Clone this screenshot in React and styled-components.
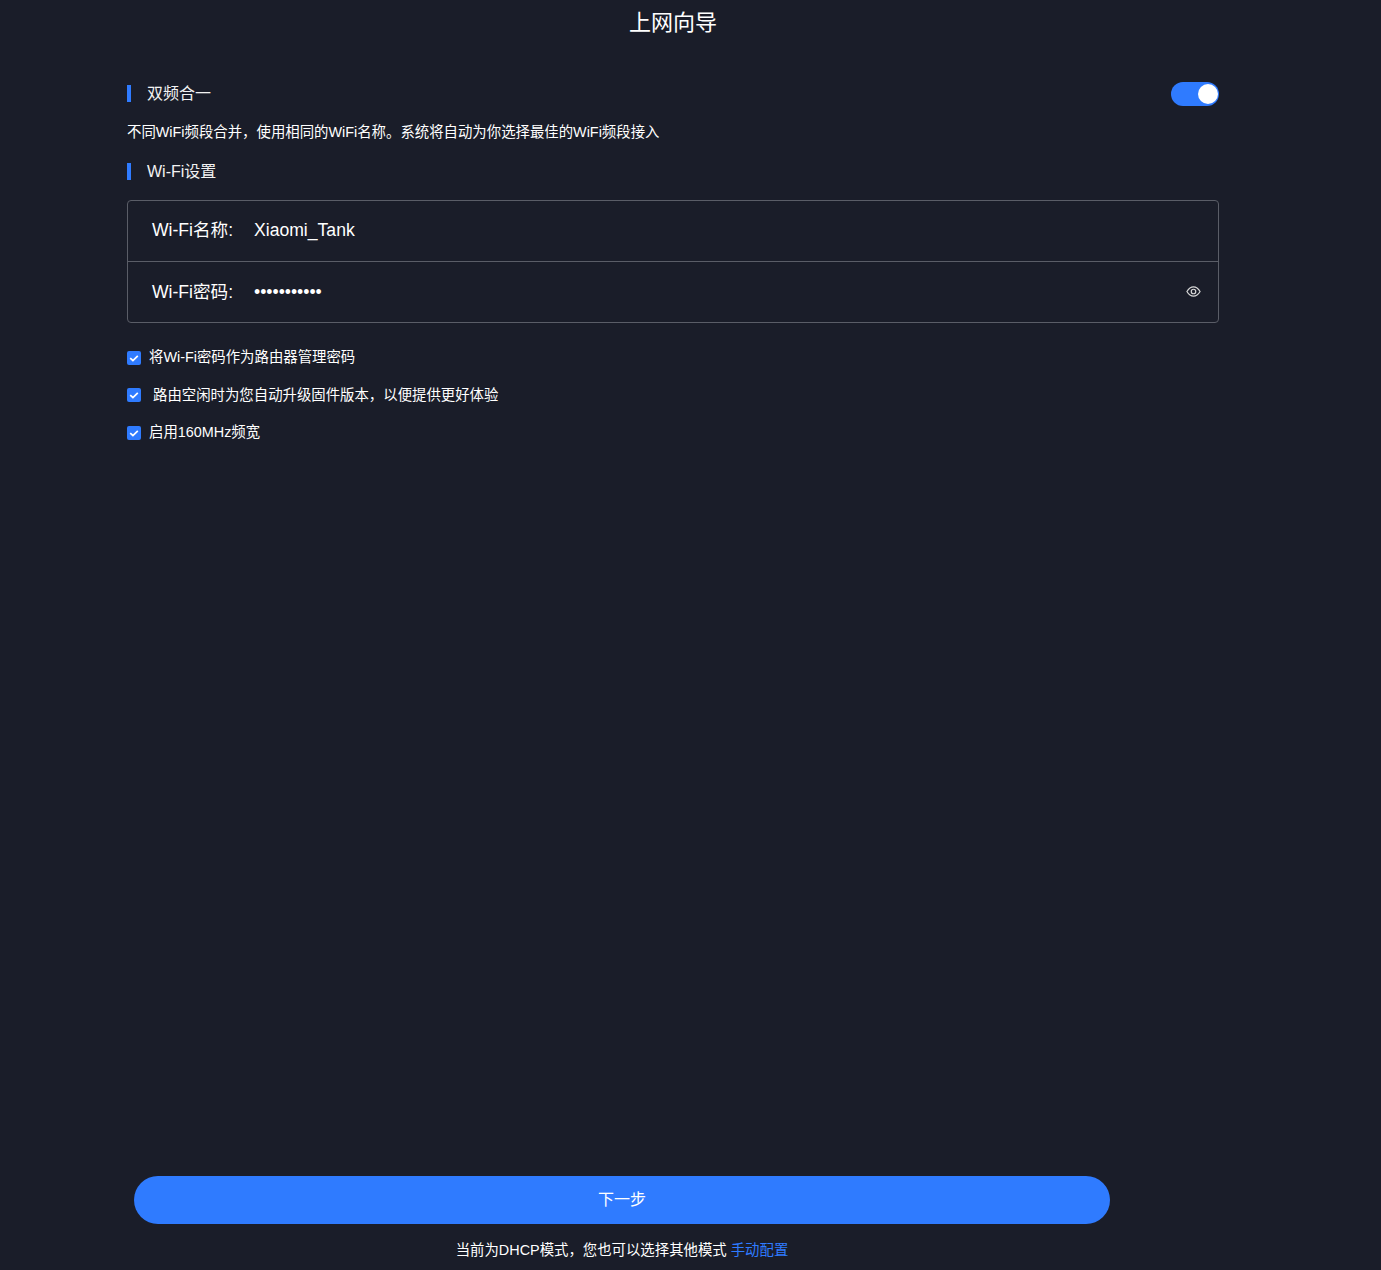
import React from "react";
import styled, { createGlobalStyle } from "styled-components";

const GlobalStyle = createGlobalStyle`
  html, body {
    margin: 0;
    padding: 0;
    background: #1a1d29;
    color: #fff;
    font-family: "Liberation Sans", "Noto Sans CJK SC", sans-serif;
  }
`;

const Page = styled.div`
  box-sizing: border-box;
  width: 1092px;
  height: 1270px;
  margin-left: 127px;
  display: flex;
  flex-direction: column;
`;

const Title = styled.h1`
  margin: 0;
  height: 45px;
  line-height: 45px;
  font-size: 22px;
  font-weight: 400;
  text-align: center;
`;

const SectionRow = styled.div`
  display: flex;
  align-items: flex-start;
  justify-content: space-between;
  height: 24px;
  margin-top: ${(p) => p.$top}px;
`;

const SectionTitle = styled.div`
  border-left: 4px solid #2f7bff;
  padding-left: 16px;
  margin-top: 3px;
  height: 17px;
  line-height: 17px;
  font-size: 16px;
  color: #f2f2f2;
`;

const Toggle = styled.div`
  position: relative;
  width: 48px;
  height: 24px;
  border-radius: 12px;
  background: #2f7bff;
`;

const Knob = styled.span`
  position: absolute;
  right: 1px;
  top: 2px;
  width: 20px;
  height: 20px;
  border-radius: 50%;
  background: #fff;
`;

const Hint = styled.p`
  margin: 18px 0 0;
  height: 16px;
  line-height: 16px;
  font-size: 14.4px;
`;

const FieldBox = styled.div`
  margin-top: 16px;
  border: 1px solid #5a5d67;
  border-radius: 4px;
`;

const FieldRow = styled.div`
  display: flex;
  align-items: center;
  height: 60px;
  padding: 0 17px 2px 24px;
  box-sizing: border-box;
  font-size: 17.6px;
  line-height: 20px;
  & + & {
    height: 61px;
    padding-bottom: 0;
    border-top: 1px solid #5a5d67;
  }
`;

const FieldLabel = styled.span`
  width: 102px;
  flex: none;
`;

const FieldValue = styled.span`
  flex: 1;
`;

const EyeIcon = styled.svg`
  width: 15px;
  height: 15px;
  margin-bottom: 2px;
  fill: none;
  stroke: #d8d8d8;
  stroke-width: 1.3;
`;

const Options = styled.div`
  margin-top: 24px;
  display: flex;
  flex-direction: column;
  gap: 18.5px;
`;

const Option = styled.label`
  display: flex;
  align-items: center;
  height: 17px;
  padding-bottom: 2px;
  font-size: 14.4px;
`;

const Check = styled.span`
  flex: none;
  display: flex;
  align-items: center;
  justify-content: center;
  width: 14px;
  height: 14px;
  margin-top: 4px;
  border-radius: 2px;
  background: #2f7bff;
  margin-right: ${(p) => p.$gap}px;
`;

const Footer = styled.div`
  margin-top: auto;
  margin-left: 7px;
  width: 976px;
  display: flex;
  flex-direction: column;
  align-items: center;
`;

const NextButton = styled.button`
  width: 100%;
  height: 48px;
  padding: 0 0 4px;
  border: 0;
  border-radius: 24px;
  background: #2f7bff;
  color: #fff;
  font: inherit;
  font-size: 16px;
`;

const ModeNote = styled.div`
  height: 46px;
  line-height: 52px;
  font-size: 14.4px;
`;

const ModeLink = styled.a`
  color: #2f7bff;
`;

function Tick() {
  return (
    <svg width="10" height="10" viewBox="0 0 10 10" fill="none" stroke="#fff" strokeWidth="1.7">
      <path d="M1.2 5.2 3.9 7.5 8.8 2.8" />
    </svg>
  );
}

const options = [
  { text: "将Wi-Fi密码作为路由器管理密码", gap: 8 },
  { text: "路由空闲时为您自动升级固件版本，以便提供更好体验", gap: 12 },
  { text: "启用160MHz频宽", gap: 8 },
];

export default function App() {
  return (
    <>
      <GlobalStyle />
      <Page>
        <Title>上网向导</Title>
        <SectionRow $top={37}>
          <SectionTitle>双频合一</SectionTitle>
          <Toggle>
            <Knob />
          </Toggle>
        </SectionRow>
        <Hint>不同WiFi频段合并，使用相同的WiFi名称。系统将自动为你选择最佳的WiFi频段接入</Hint>
        <SectionRow $top={20}>
          <SectionTitle>Wi-Fi设置</SectionTitle>
        </SectionRow>
        <FieldBox>
          <FieldRow>
            <FieldLabel>Wi-Fi名称:</FieldLabel>
            <FieldValue>Xiaomi_Tank</FieldValue>
          </FieldRow>
          <FieldRow>
            <FieldLabel>Wi-Fi密码:</FieldLabel>
            <FieldValue>•••••••••••</FieldValue>
            <EyeIcon viewBox="0 0 16 16">
              <path d="M1 8c2-3.4 4.3-5 7-5s5 1.6 7 5c-2 3.4-4.3 5-7 5s-5-1.6-7-5z" />
              <circle cx="8" cy="8" r="2.4" />
            </EyeIcon>
          </FieldRow>
        </FieldBox>
        <Options>
          {options.map((o) => (
            <Option key={o.text}>
              <Check $gap={o.gap}>
                <Tick />
              </Check>
              {o.text}
            </Option>
          ))}
        </Options>
        <Footer>
          <NextButton>下一步</NextButton>
          <ModeNote>
            当前为DHCP模式，您也可以选择其他模式 <ModeLink>手动配置</ModeLink>
          </ModeNote>
        </Footer>
      </Page>
    </>
  );
}
